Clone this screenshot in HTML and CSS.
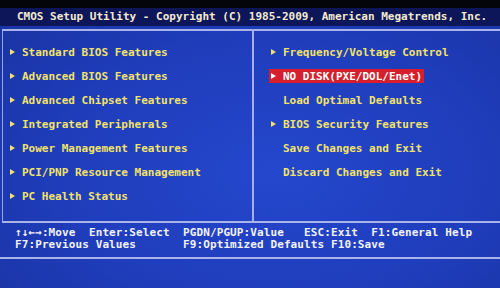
FILE: index.html
```html
<!DOCTYPE html>
<html lang="en">
<head>
  <meta charset="UTF-8">
  <title>CMOS Setup Utility</title>
  <link rel="stylesheet" href="styles.css">
</head>
<body>
  <div class="screen">
    <div class="top-edge"></div>
    <div class="title-bar">CMOS Setup Utility - Copyright (C) 1985-2009, American Megatrends, Inc.</div>

    <div class="panel">
      <ul class="menu menu-left">
        <li><span class="arrow"></span>Standard BIOS Features</li>
        <li><span class="arrow"></span>Advanced BIOS Features</li>
        <li><span class="arrow"></span>Advanced Chipset Features</li>
        <li><span class="arrow"></span>Integrated Peripherals</li>
        <li><span class="arrow"></span>Power Management Features</li>
        <li><span class="arrow"></span>PCI/PNP Resource Management</li>
        <li><span class="arrow"></span>PC Health Status</li>
      </ul>
      <ul class="menu menu-right">
        <li><span class="arrow"></span>Frequency/Voltage Control</li>
        <li class="selected"><span class="arrow"></span>NO DISK(PXE/DOL/Enet)</li>
        <li><span class="arrow hidden"></span>Load Optimal Defaults</li>
        <li><span class="arrow"></span>BIOS Security Features</li>
        <li><span class="arrow hidden"></span>Save Changes and Exit</li>
        <li><span class="arrow hidden"></span>Discard Changes and Exit</li>
      </ul>
    </div>

    <div class="help">
      <pre class="help-line">↑↓←→:Move  Enter:Select  PGDN/PGUP:Value   ESC:Exit  F1:General Help</pre>
      <pre class="help-line">F7:Previous Values       F9:Optimized Defaults F10:Save</pre>
    </div>
  </div>
</body>
</html>
```

FILE: styles.css
```css
body {
  margin: 0;
  background: #05060c;
  font-family: "DejaVu Sans Mono", "Liberation Mono", monospace;
  font-weight: bold;
  font-size: 11px;
}

.screen {
  width: 500px;
  height: 288px;
  overflow: hidden;
  background: radial-gradient(ellipse at 55% 60%, #2447cc 0%, #1f3dbb 55%, #1a32a0 100%);
}

.top-edge {
  height: 8px;
  background: #04050a;
}

.title-bar {
  height: 18px;
  line-height: 18px;
  padding-left: 17px;
  background: #0d1658;
  color: #f2ead0;
  white-space: nowrap;
}

.panel {
  display: flex;
  height: 190px;
  margin-top: 3px;
  margin-left: 2px;
  border-top: 2px solid #aab4ec;
  border-left: 1px solid #9aa6e4;
  border-bottom: 2px solid #aab4ec;
}

.menu {
  list-style: none;
  margin: 0;
  padding: 9px 0 0;
}

.menu-left {
  width: 251px;
  padding-left: 7px;
  border-right: 2px solid #a4aeea;
  box-sizing: border-box;
}

.menu-right {
  padding-left: 17px;
}

.menu li {
  height: 24px;
  display: flex;
  align-items: center;
  color: #f2e268;
  white-space: nowrap;
}

.arrow {
  width: 0;
  height: 0;
  border-top: 3.5px solid transparent;
  border-bottom: 3.5px solid transparent;
  border-left: 5px solid #f2e268;
  margin-right: 7px;
}

.arrow.hidden {
  visibility: hidden;
}

.menu li.selected {
  width: fit-content;
  height: 14px;
  margin: 5px 0 5px -2px;
  padding: 0 2px;
  background: #d61e2c;
  color: #ffffff;
}

.menu li.selected .arrow {
  border-left-color: #ffffff;
}

.help {
  height: 30px;
  padding: 4px 0 0 15px;
  border-bottom: 2px solid #aab4ec;
}

.help-line {
  margin: 0;
  font: inherit;
  height: 12px;
  line-height: 12px;
  color: #f2f2f6;
  letter-spacing: 0.1px;
}
```
